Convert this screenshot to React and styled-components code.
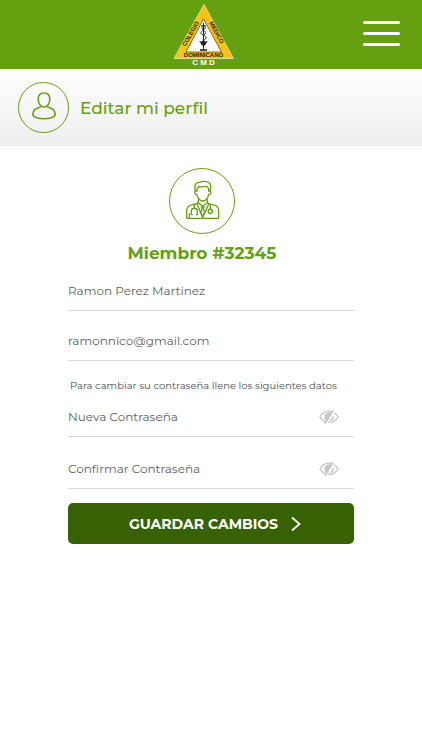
import React from "react";
import styled, { createGlobalStyle } from "styled-components";

const green = "#64a010";

function Logo() {
  return (
    <LogoSvg viewBox="0 0 64 64" role="img" aria-label="Colegio Médico Dominicano">
      <path d="M32 2.5 L61.5 56.5 H2 Z" fill="#f8c312" stroke="#d9dc8a" strokeWidth="1" />
      <path d="M31.5 17 L49.5 50 H14 Z" fill="#fff" stroke="#4a4a20" strokeWidth="0.8" />
      <g fill="none" stroke="#222" strokeWidth="1">
        <path d="M31.5 21 V47" />
        <path d="M29 24 C33 22 35 26 31.5 28 C28 30 28 32 31.5 33 C35 34 35 37 31.5 38" />
        <path d="M34 24 C30 23 29 26 31.5 28 C34 30 34 32 31.5 33" />
        <path d="M28 39 C28 43 35 43 35 39" />
        <path d="M28 48 H35" strokeWidth="1.6" />
      </g>
      <circle cx="31.5" cy="41" r="2.6" fill="#222" />
      <LogoText x="31.5" y="55" $size={6}>DOMINICANO</LogoText>
      <LogoText transform="translate(20.4 32.8) rotate(-60)" $size={6}>COLEGIO</LogoText>
      <LogoText transform="translate(42.8 31.6) rotate(61)" $size={6}>MEDICO</LogoText>
      <LogoText x="31.5" y="63" $size={8} $light>C M D</LogoText>
    </LogoSvg>
  );
}

function PersonIcon() {
  return (
    <svg width="26" height="33" viewBox="0 0 26 33" fill="none" stroke={green} strokeWidth="1.6" aria-hidden="true">
      <path d="M13 2 C16.8 2 18.8 4.6 18.8 8.3 C18.8 12.6 16.4 16 13 16 C9.6 16 7.2 12.6 7.2 8.3 C7.2 4.6 9.2 2 13 2 Z" />
      <path d="M9.6 16 C4.8 17.2 2 18.6 2 22.4 V24.4 C3.6 26.8 8 27.8 13 27.8 C18 27.8 22.4 26.8 24 24.4 V22.4 C24 18.6 21.2 17.2 16.4 16" />
    </svg>
  );
}

function DoctorIcon() {
  return (
    <svg width="35" height="43" viewBox="75 58 105 129" fill="none" stroke={green} strokeWidth="4" strokeLinecap="round" strokeLinejoin="round" aria-hidden="true">
      <path d="M106 92 C102 76 106 64 119 65 C128 60 154 60 152 80 C152 85 151 89 150 92" />
      <path d="M111 91 V83 C114 82 115 79 115 77 C124 81 132 76 141 77 C142 80 143 82 146 83 V91" />
      <path d="M110 90 C101 90 104 103 111 102 C114 114 120 121 128 121 C136 121 143 114 146 102 C153 103 156 90 147 90" />
      <path d="M115 117 V125 C113 131 98 132 90 134 C82 137 80 145 80 153 V173 H176 V153 C176 145 174 137 166 134 C158 132 144 131 142 125 V117" />
      <path d="M115 126 L128 137 L142 126" />
      <path d="M112 132 L128 170 L145 132" />
      <path d="M124 139 H132 L130 146 L134 155 L128 169 L122 155 L126 146 Z" />
      <path d="M103 133 V143 M97 162 H94 V151 C94 140 112 140 112 151 V162 H109" />
      <path d="M151 132 V145" />
      <circle cx="151" cy="152" r="6.5" />
      <path d="M88 160 V171" />
    </svg>
  );
}

function HiddenEyeIcon() {
  return (
    <svg width="20" height="14" viewBox="0 0 20 14" fill="none" stroke="#c6c6c6" strokeWidth="1.4" strokeLinecap="round" aria-hidden="true">
      <path d="M12.6 1.5 C7.4 .2 3.2 3 1 7 C2 9 3.6 10.7 5.6 11.7" />
      <path d="M15.4 3 C17 4 18.2 5.4 19 7 C16.9 10.8 13.6 12.6 9.6 12.4" />
      <path d="M11.2 3 C8.2 2.6 6 4.6 6 7.2 C6 8.4 6.4 9.2 7 9.8 Z" fill="#c6c6c6" />
      <path d="M13.6 1 L6.4 13" strokeWidth="1.8" />
      <path d="M14 6 C14.3 8 13.4 9.6 11.8 10.4" />
    </svg>
  );
}

function PasswordField({ label }) {
  return (
    <Field $gap={14}>
      <Input type="password" aria-label={label} placeholder={label} aria-describedby="password-hint" />
      <EyeButton type="button" aria-label="Mostrar contraseña">
        <HiddenEyeIcon />
      </EyeButton>
    </Field>
  );
}

function App() {
  return (
    <>
      <GlobalStyle />
      <Header>
        <Logo />
        <MenuButton type="button" aria-label="Menú">
          <Bar />
          <Bar />
          <Bar />
        </MenuButton>
      </Header>

      <TitleBar>
        <Circle $size={51}>
          <PersonIcon />
        </Circle>
        <Title>Editar mi perfil</Title>
      </TitleBar>

      <Main>
        <Member>
          <Circle $size={66}>
            <DoctorIcon />
          </Circle>
          <MemberNumber>Miembro #32345</MemberNumber>
        </Member>

        <Form onSubmit={(e) => e.preventDefault()}>
          <Field $gap={12}>
            <Input type="text" aria-label="Nombre" defaultValue="Ramon Perez Martinez" />
          </Field>
          <Field $gap={12}>
            <Input type="email" aria-label="Correo" defaultValue="ramonnico@gmail.com" />
          </Field>
          <Hint id="password-hint">Para cambiar su contraseña llene los siguientes datos</Hint>
          <PasswordField label="Nueva Contraseña" />
          <PasswordField label="Confirmar Contraseña" />
          <SaveButton type="submit">
            GUARDAR CAMBIOS
            <svg width="10" height="16" viewBox="0 0 10 16" fill="none" stroke="#fff" strokeWidth="1.8" aria-hidden="true">
              <path d="M1 1.5 L8.5 8 L1 14.5" />
            </svg>
          </SaveButton>
        </Form>
      </Main>
    </>
  );
}

const GlobalStyle = createGlobalStyle`
  * {
    box-sizing: border-box;
  }

  body {
    margin: 0;
    background: #fff;
    font-family: Montserrat, Inter, sans-serif;
  }
`

const Header = styled.header`
  display: grid;
  grid-template-columns: 1fr auto 1fr;
  align-items: center;
  padding: 2px 22px 3px 8px;
  background: ${green};
`

const LogoSvg = styled.svg`
  grid-column: 2;
  display: block;
  width: 64px;
  height: 64px;
`

const LogoText = styled.text`
  font-family: "Liberation Sans", Arial, sans-serif;
  font-size: ${(props) => props.$size}px;
  font-weight: bold;
  text-anchor: middle;
  fill: ${(props) => (props.$light ? "#fff" : "#1c1a08")};
`

const MenuButton = styled.button`
  justify-self: end;
  display: flex;
  flex-direction: column;
  gap: 8px;
  width: 37px;
  height: 26px;
  padding: 0;
  border: 0;
  background: none;
  cursor: pointer;
`

const Bar = styled.span`
  width: 100%;
  height: 3px;
  border-radius: 2px;
  background: #fff;
`

const TitleBar = styled.div`
  display: flex;
  align-items: center;
  gap: 11px;
  padding: 13px 18px;
  background: linear-gradient(#fff, #eee);
`

const Circle = styled.div`
  display: flex;
  justify-content: center;
  align-items: center;
  flex-shrink: 0;
  width: ${(props) => props.$size}px;
  height: ${(props) => props.$size}px;
  border: 1px solid ${green};
  border-radius: 50%;
`

const Title = styled.h1`
  margin: 0;
  color: ${green};
  font-size: 17px;
  line-height: 22px;
  font-weight: 500;
`

const Main = styled.main`
  padding: 22px 68px;
`

const Member = styled.div`
  display: flex;
  flex-direction: column;
  align-items: center;
  padding-right: 18px;
`

const MemberNumber = styled.h2`
  margin: 8px 0 9px;
  color: ${green};
  font-size: 17px;
  line-height: 22px;
  font-weight: 700;
`

const Form = styled.form`
  display: flex;
  flex-direction: column;
`

const Field = styled.div`
  display: flex;
  align-items: center;
  height: 38px;
  margin-bottom: ${(props) => props.$gap}px;
  padding-bottom: 2px;
  border-bottom: 1px solid #d8d8d8;
`

const Input = styled.input`
  flex: 1;
  min-width: 0;
  height: 100%;
  padding: 0;
  border: 0;
  outline: 0;
  background: none;
  color: #606060;
  font-family: inherit;
  font-size: 12px;

  &::placeholder {
    color: #606060;
    opacity: 1;
  }
`

const EyeButton = styled.button`
  display: flex;
  padding: 0;
  margin-right: 15px;
  border: 0;
  background: none;
  cursor: pointer;
`

const Hint = styled.p`
  margin: 5px 2px;
  color: #4c4c4c;
  font-size: 10px;
  line-height: 16px;
`

const SaveButton = styled.button`
  display: flex;
  justify-content: center;
  align-items: center;
  gap: 13px;
  height: 41px;
  padding: 0 0 0 8px;
  border: 0;
  border-radius: 5px;
  background: #376202;
  color: #fff;
  font-family: inherit;
  font-size: 14px;
  font-weight: 700;
  cursor: pointer;
`

export default App;
